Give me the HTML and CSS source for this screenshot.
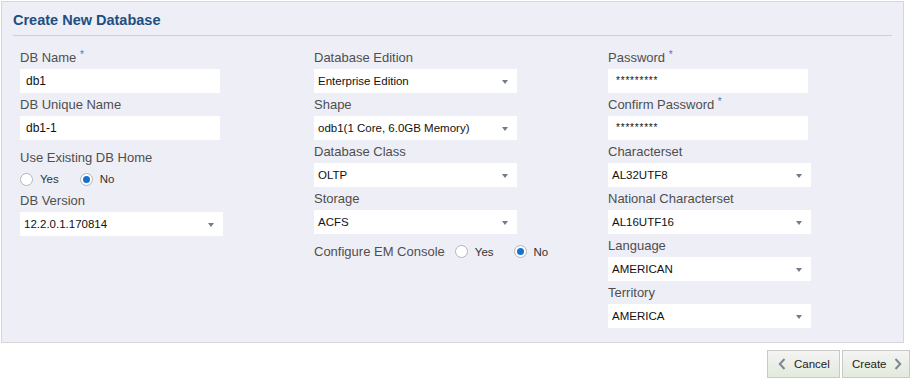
FILE: index.html
```html
<!DOCTYPE html>
<html lang="en">
<head>
    <meta charset="UTF-8">
    <title>Create New Database</title>
    <link rel="stylesheet" href="styles.css">
</head>
<body>
    <section class="panel">
        <h2 class="panel-title">Create New Database</h2>

        <div class="form-grid">
            <!-- Column 1 -->
            <div class="col">
                <div class="field">
                    <label>DB Name <span class="req">*</span></label>
                    <div class="input">db1</div>
                </div>
                <div class="field">
                    <label>DB Unique Name</label>
                    <div class="input">db1-1</div>
                </div>
                <div class="field field-radio">
                    <label>Use Existing DB Home</label>
                    <div class="radios">
                        <span class="radio"></span><span class="radio-text">Yes</span>
                        <span class="radio checked"></span><span class="radio-text">No</span>
                    </div>
                </div>
                <div class="field">
                    <label>DB Version</label>
                    <div class="input select">12.2.0.1.170814</div>
                </div>
            </div>

            <!-- Column 2 -->
            <div class="col">
                <div class="field">
                    <label>Database Edition</label>
                    <div class="input select">Enterprise Edition</div>
                </div>
                <div class="field">
                    <label>Shape</label>
                    <div class="input select">odb1(1 Core, 6.0GB Memory)</div>
                </div>
                <div class="field">
                    <label>Database Class</label>
                    <div class="input select">OLTP</div>
                </div>
                <div class="field">
                    <label>Storage</label>
                    <div class="input select">ACFS</div>
                </div>
                <div class="inline-radio">
                    <label>Configure EM Console</label>
                    <span class="radio"></span><span class="radio-text">Yes</span>
                    <span class="radio checked"></span><span class="radio-text">No</span>
                </div>
            </div>

            <!-- Column 3 -->
            <div class="col">
                <div class="field">
                    <label>Password <span class="req">*</span></label>
                    <div class="input pwd">*********</div>
                </div>
                <div class="field">
                    <label>Confirm Password <span class="req">*</span></label>
                    <div class="input pwd">*********</div>
                </div>
                <div class="field">
                    <label>Characterset</label>
                    <div class="input select">AL32UTF8</div>
                </div>
                <div class="field">
                    <label>National Characterset</label>
                    <div class="input select">AL16UTF16</div>
                </div>
                <div class="field">
                    <label>Language</label>
                    <div class="input select">AMERICAN</div>
                </div>
                <div class="field">
                    <label>Territory</label>
                    <div class="input select">AMERICA</div>
                </div>
            </div>
        </div>
    </section>

    <div class="actions">
        <button class="btn btn-cancel">
            <svg class="chev" width="8" height="12" viewBox="0 0 8 12"><path d="M6.5 1 L1.8 6 L6.5 11" fill="none" stroke="#7f878e" stroke-width="2"/></svg>
            Cancel
        </button>
        <button class="btn btn-create">
            Create
            <svg class="chev" width="8" height="12" viewBox="0 0 8 12"><path d="M1.5 1 L6.2 6 L1.5 11" fill="none" stroke="#7f878e" stroke-width="2"/></svg>
        </button>
    </div>
</body>
</html>
```

FILE: styles.css
```css
* {
    margin: 0;
    padding: 0;
    box-sizing: border-box;
}

body {
    font-family: 'Liberation Sans', Arial, sans-serif;
    background: #fff;
    color: #222;
    width: 917px;
    height: 385px;
    overflow: hidden;
}

/* Panel */
.panel {
    margin: 1px 0 0 1px;
    width: 903px;
    height: 342px;
    background: #eeeef6;
    border: 1px solid #d6d6d9;
}

.panel-title {
    margin: 0 11px;
    padding-top: 10px;
    height: 34px;
    font-size: 14.5px;
    font-weight: bold;
    color: #1d4f80;
    border-bottom: 1px solid #cfcfd4;
}

.form-grid {
    display: grid;
    grid-template-columns: 294px 294px 294px;
    padding: 10px 0 0 18px;
}

.field label,
.inline-radio label {
    display: block;
    height: 23px;
    line-height: 23px;
    font-size: 13px;
    color: #4f4f4f;
}

.req {
    position: relative;
    top: -4px;
    color: #3b7bbf;
    font-size: 10px;
}

.input {
    position: relative;
    width: 200px;
    height: 24px;
    line-height: 24px;
    padding-left: 6px;
    background: #fff;
    font-size: 12px;
    color: #111;
}

.select {
    width: 203px;
    font-size: 11.5px;
    padding-left: 4px;
}

.select::after {
    content: '';
    position: absolute;
    right: 9px;
    top: 11px;
    border-left: 3.5px solid transparent;
    border-right: 3.5px solid transparent;
    border-top: 4px solid #6f7d86;
}

.pwd {
    padding-left: 8px;
    font-size: 10px;
    letter-spacing: 0.8px;
}

/* Radios */
.field-radio {
    margin-top: 6px;
    height: 43px;
}

.radios {
    display: flex;
    align-items: center;
    height: 20px;
}

.radio {
    display: inline-block;
    width: 13px;
    height: 13px;
    border-radius: 50%;
    border: 1px solid #b5b5b5;
    background: #fff;
    position: relative;
}

.radio.checked::after {
    content: '';
    position: absolute;
    left: 2px;
    top: 2px;
    width: 7px;
    height: 7px;
    border-radius: 50%;
    background: #1673cc;
}

.radio-text {
    font-size: 11.5px;
    color: #333;
    margin: 0 21px 0 7px;
}

.inline-radio {
    display: flex;
    align-items: center;
    margin-top: 6px;
}

.inline-radio label {
    margin-right: 10px;
}

.inline-radio .radio-text {
    margin: 0 20px 0 7px;
}

/* Buttons */
.actions {
    display: flex;
    justify-content: flex-end;
    gap: 2px;
    padding: 7px 7px 0 0;
}

.btn {
    display: flex;
    align-items: center;
    height: 28px;
    font-family: inherit;
    font-size: 11.5px;
    color: #222;
    border: 1px solid #c9c9c9;
    background: linear-gradient(#f4f4f4, #e2eadc);
}

.btn-cancel {
    width: 73px;
    padding-left: 10px;
    gap: 8px;
}

.btn-create {
    width: 68px;
    padding-left: 9px;
    gap: 7px;
}

.chev {
    flex: none;
}
```
